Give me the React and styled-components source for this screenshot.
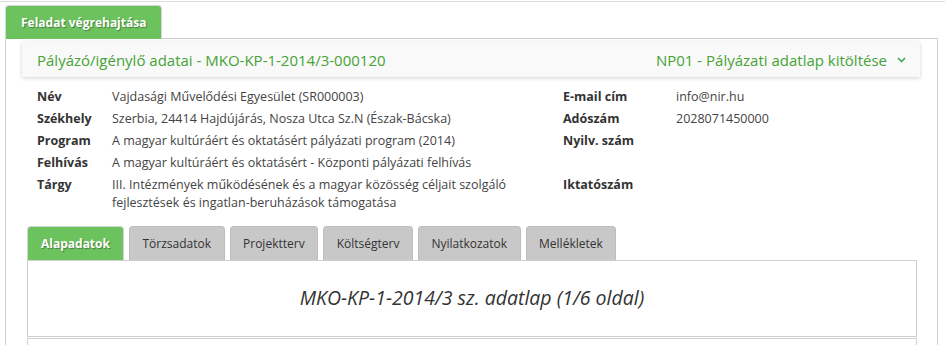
import styled, { createGlobalStyle } from 'styled-components';

const GlobalStyle = createGlobalStyle`
  body {
    margin: 0;
    background: #fff;
    font-family: "Open Sans", "Liberation Sans", sans-serif;
    color: #333;
  }
`

const Page = styled.div`
  padding: 0 7px 0 5px;
  border-top: 1px solid #ddd;
  margin-top: 1px;
  height: 343px;
  overflow: hidden;
`

const TabBar = styled.div`
  display: flex;
  padding-top: 3px;
`

const OuterTab = styled.div`
  position: relative;
  z-index: 1;
  height: 33px;
  padding: 0 15px;
  margin-bottom: -1px;
  display: flex;
  align-items: center;
  background: #6cc35e;
  border: 1px solid #d6d6d6;
  border-bottom: none;
  border-radius: 4px 4px 0 0;
  color: #fff;
  font-size: 12px;
  font-weight: 700;
  text-shadow: 1px 1px 1px rgba(0, 0, 0, 0.35);
`

const Panel = styled.div`
  border: 1px solid #cfcfcf;
  padding: 3px 17px 0 16px;
  height: 400px;
`

const HeaderCard = styled.div`
  height: 35px;
  display: flex;
  align-items: center;
  justify-content: space-between;
  padding: 0 14px 0 15px;
  background: #f9f9f9;
  box-shadow: 0 1px 4px rgba(0, 0, 0, 0.18);
  color: #45a336;
  font-size: 15px;
`

const Status = styled.div`
  display: flex;
  align-items: center;
  gap: 10px;
`

const Info = styled.div`
  display: grid;
  grid-template-columns: 526px 1fr;
  margin-top: 9px;
`

const InfoCol = styled.div`
  padding: 0 15px;
  display: grid;
  grid-template-columns: ${p => p.$labelWidth}px 1fr;
  align-content: start;
  font-size: 12.5px;
  line-height: 18px;
`

const Label = styled.div`
  font-weight: 700;
  color: #333;
  padding: 2px 0;
  min-height: 18px;
`

const Value = styled.div`
  color: #444;
  padding: 2px 0;
  min-height: 18px;
`

const Tabs = styled.div`
  margin: 12px 3px 0 5px;
`

const TabRow = styled.div`
  display: flex;
  gap: 5px;
`

const Tab = styled.div`
  height: 33px;
  padding: 0 ${p => (p.$active ? 13 : 12.5)}px;
  display: flex;
  align-items: center;
  border: 1px solid ${p => (p.$active ? '#d6d6d6' : '#bdbdbd')};
  border-bottom: none;
  border-radius: 4px 4px 0 0;
  background: ${p => (p.$active ? '#6cc35e' : '#c8c8c8')};
  color: ${p => (p.$active ? '#fff' : '#333')};
  font-size: 12px;
  font-weight: ${p => (p.$active ? 700 : 400)};
  text-shadow: ${p => (p.$active ? '1px 1px 1px rgba(0, 0, 0, 0.35)' : 'none')};
`

const TabContent = styled.div`
  border: 1px solid #cfcfcf;
  padding: 24px 0 25px;
  text-align: center;
  font-size: 19.5px;
  line-height: 26px;
  font-style: italic;
  color: #333;
`

const NextBox = styled.div`
  margin-top: 1px;
  border: 1px solid #cfcfcf;
  height: 40px;
`

const Chevron = () => (
  <svg width="9" height="6" viewBox="0 0 9 6">
    <path d="M1 1l3.5 3.5L8 1" fill="none" stroke="#43a85a" strokeWidth="1.6" />
  </svg>
)

const leftRows = [
  ['Név', 'Vajdasági Művelődési Egyesület (SR000003)'],
  ['Székhely', 'Szerbia, 24414 Hajdújárás, Nosza Utca Sz.N (Észak-Bácska)'],
  ['Program', 'A magyar kultúráért és oktatásért pályázati program (2014)'],
  ['Felhívás', 'A magyar kultúráért és oktatásért - Központi pályázati felhívás'],
  ['Tárgy', 'III. Intézmények működésének és a magyar közösség céljait szolgáló fejlesztések és ingatlan-beruházások támogatása'],
]

const rightRows = [
  ['E-mail cím', 'info@nir.hu'],
  ['Adószám', '2028071450000'],
  ['Nyilv. szám', ''],
  ['', ''],
  ['Iktatószám', ''],
]

const tabs = ['Alapadatok', 'Törzsadatok', 'Projektterv', 'Költségterv', 'Nyilatkozatok', 'Mellékletek']

export default function App() {
  return (
    <>
      <GlobalStyle />
      <Page>
        <TabBar>
          <OuterTab>Feladat végrehajtása</OuterTab>
        </TabBar>
        <Panel>
          <HeaderCard>
            <span>Pályázó/igénylő adatai - MKO-KP-1-2014/3-000120</span>
            <Status>
              <span>NP01 - Pályázati adatlap kitöltése</span>
              <Chevron />
            </Status>
          </HeaderCard>
          <Info>
            <InfoCol $labelWidth={75}>
              {leftRows.map(([l, v]) => [
                <Label key={l}>{l}</Label>,
                <Value key={l + 'v'}>{v}</Value>,
              ])}
            </InfoCol>
            <InfoCol $labelWidth={113}>
              {rightRows.map(([l, v], i) => [
                <Label key={'l' + i}>{l}</Label>,
                <Value key={'v' + i}>{v}</Value>,
              ])}
            </InfoCol>
          </Info>
          <Tabs>
            <TabRow>
              {tabs.map((t, i) => (
                <Tab key={t} $active={i === 0}>{t}</Tab>
              ))}
            </TabRow>
            <TabContent>MKO-KP-1-2014/3 sz. adatlap (1/6 oldal)</TabContent>
            <NextBox />
          </Tabs>
        </Panel>
      </Page>
    </>
  )
}
